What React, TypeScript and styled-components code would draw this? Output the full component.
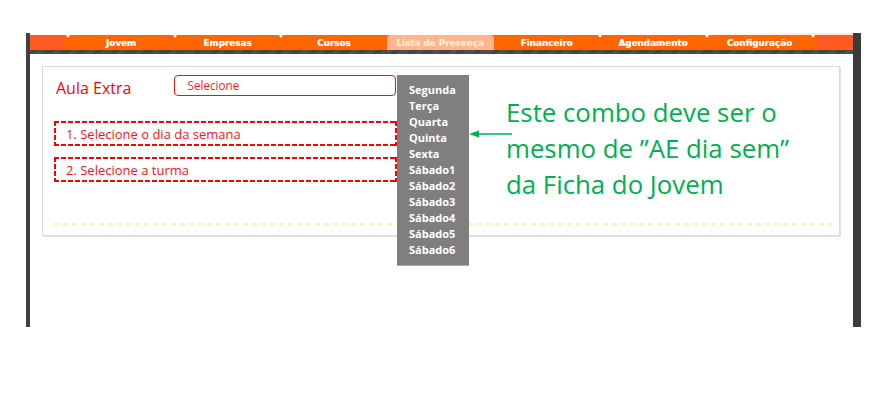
import React from "react";
import styled, { createGlobalStyle, css } from "styled-components";

const GlobalStyle = createGlobalStyle`
  html, body { margin: 0; padding: 0; background: #ffffff; }
  body { font-family: "Open Sans", "Noto Sans", sans-serif; }
  * { box-sizing: border-box; }
`;

const Page = styled.div`
  padding: 33px 0 0 26px;
  width: 893px;
  height: 412px;
`;

const Frame = styled.div`
  width: 835px;
  height: 294px;
  border-left: 4px solid #404040;
  border-right: 8px solid #3b3b3b;
  padding-top: 2px;
  background: linear-gradient(to right, #ffffff 80%, #ffe3cf) top / 100% 2px no-repeat;
  position: relative;
`;

const Nav = styled.nav`
  height: 15px;
  display: flex;
  padding-left: 38px;
  background: linear-gradient(
    to right,
    #ff5a22 0 34px,
    #ff6600 34px calc(100% - 35px),
    #ff5a22 calc(100% - 35px)
  );
`;

const notch = css`
  content: "";
  position: absolute;
  top: 0;
  width: 0;
  height: 0;
  border-left: 2.5px solid transparent;
  border-right: 2.5px solid transparent;
  border-top: 3px solid #ffffff;
`;

const Tab = styled.div<{ $active?: boolean; $notchLeft?: boolean; $notchRight?: boolean }>`
  position: relative;
  flex: 0 0 106.4px;
  display: flex;
  align-items: center;
  justify-content: center;
  font-family: "DejaVu Sans", Verdana, sans-serif;
  font-weight: bold;
  font-size: 8.8px;
  color: ${(p) => (p.$active ? "#fff1e6" : "#ffffff")};
  text-shadow: ${(p) => (p.$active ? "none" : "0 0 0.5px #ffffff")};
  background: ${(p) => (p.$active ? "#ffb68c" : "transparent")};
  border-radius: ${(p) => (p.$active ? "4px 4px 0 0" : "0")};
  white-space: nowrap;
  ${(p) =>
    p.$notchLeft &&
    css`
      &::before {
        ${notch};
        left: -2.5px;
      }
    `}
  ${(p) =>
    p.$notchRight &&
    css`
      &::after {
        ${notch};
        right: -2.5px;
      }
    `}
`;

const NavShadow = styled.div`
  height: 4px;
  background: repeating-linear-gradient(135deg, #3c3c3c 0 1px, #575757 1px 2px);
`;

const Panel = styled.section`
  margin: 12px 13px 0 12px;
  height: 170px;
  border: 1px solid #d9d9d9;
  box-shadow: 1px 1px 0 #e6e6e6;
  padding: 8px 6px 10px 11px;
  display: flex;
  flex-direction: column;
  background: #ffffff;
`;

const TopArea = styled.div`
  flex: 1;
  display: flex;
  align-items: flex-start;
`;

const LeftColumn = styled.div`
  width: 343px;
  display: flex;
  flex-direction: column;
`;

const FieldRow = styled.div`
  display: flex;
  align-items: flex-start;
  height: 21px;
`;

const Label = styled.span`
  flex: 0 0 118px;
  margin-left: 2px;
  padding-top: 2.5px;
  font-size: 16px;
  color: #ff0000;
  line-height: 21px;
`;

const SelectBox = styled.div`
  position: relative;
  width: 222px;
  height: 21px;
  border: 1.5px solid #f01010;
  border-radius: 4px;
  padding-left: 12.5px;
  font-size: 11.7px;
  line-height: 19px;
  color: #ff1a1a;
`;

const Dropdown = styled.ul`
  position: absolute;
  z-index: 10;
  left: calc(100% + 2px);
  top: -1.5px;
  width: 72px;
  margin: 0;
  padding: 7px 0 7px 12px;
  list-style: none;
  background: #7f7f7f;
  border-bottom: 1px solid #a8a8a8;
  font-weight: bold;
  font-size: 11px;
  line-height: 16px;
  color: #ffffff;
`;

const DropItem = styled.li`
  white-space: nowrap;
`;

const StepBox = styled.div<{ $gap: number }>`
  margin-top: ${(p) => p.$gap}px;
  height: 25px;
  width: 343px;
  padding-left: 12px;
  display: flex;
  align-items: center;
  font-size: 13px;
  color: #ff1010;
  background:
    linear-gradient(to right, #ff0000 5px, transparent 5px) left top / 7px 2px repeat-x,
    linear-gradient(to right, #ff0000 5px, transparent 5px) left bottom / 7px 2px repeat-x,
    linear-gradient(to bottom, #ff0000 5px, transparent 5px) left top / 2px 7px repeat-y,
    linear-gradient(to bottom, #ff0000 5px, transparent 5px) right top / 2px 7px repeat-y;
`;

const Annotation = styled.div`
  margin-left: 72px;
  margin-top: 18.5px;
  display: flex;
  align-items: flex-start;
`;

const Arrow = styled.svg`
  flex: 0 0 37px;
  margin-top: 35.5px;
  overflow: visible;
`;

const Note = styled.p`
  margin: 0;
  font-size: 25.8px;
  line-height: 36px;
  color: #00b050;
  white-space: nowrap;
`;

const DottedLine = styled.div`
  height: 2px;
  background: linear-gradient(to right, #fff0b8 5px, transparent 5px) left top / 9px 2px repeat-x;
`;

const tabs = [
  "Jovem",
  "Empresas",
  "Cursos",
  "Lista de Presença",
  "Financeiro",
  "Agendamento",
  "Configuração",
];

const days = [
  "Segunda",
  "Terça",
  "Quarta",
  "Quinta",
  "Sexta",
  "Sábado1",
  "Sábado2",
  "Sábado3",
  "Sábado4",
  "Sábado5",
  "Sábado6",
];

const activeIndex = 3;

export default function App() {
  return (
    <>
      <GlobalStyle />
      <Page>
        <Frame>
          <Nav>
            {tabs.map((t, i) => (
              <Tab
                key={t}
                $active={i === activeIndex}
                $notchLeft={i === 0}
                $notchRight={i !== activeIndex && i !== activeIndex - 1}
              >
                {t}
              </Tab>
            ))}
          </Nav>
          <NavShadow />
          <Panel>
            <TopArea>
              <LeftColumn>
                <FieldRow>
                  <Label>Aula Extra</Label>
                  <SelectBox>
                    Selecione
                    <Dropdown>
                      {days.map((d) => (
                        <DropItem key={d}>{d}</DropItem>
                      ))}
                    </Dropdown>
                  </SelectBox>
                </FieldRow>
                <StepBox $gap={25}>1. Selecione o dia da semana</StepBox>
                <StepBox $gap={11}>2. Selecione a turma</StepBox>
              </LeftColumn>
              <Annotation>
                <Arrow width="37" height="10" viewBox="0 0 37 10">
                  <line x1="6" y1="5" x2="43" y2="5" stroke="#00b050" strokeWidth="1.3" />
                  <polygon points="0,5 10,1.5 10,8.5" fill="#00b050" />
                </Arrow>
                <Note>
                  Este combo deve ser o
                  <br />
                  mesmo de ”AE dia sem”
                  <br />
                  da Ficha do Jovem
                </Note>
              </Annotation>
            </TopArea>
            <DottedLine />
          </Panel>
        </Frame>
      </Page>
    </>
  );
}
